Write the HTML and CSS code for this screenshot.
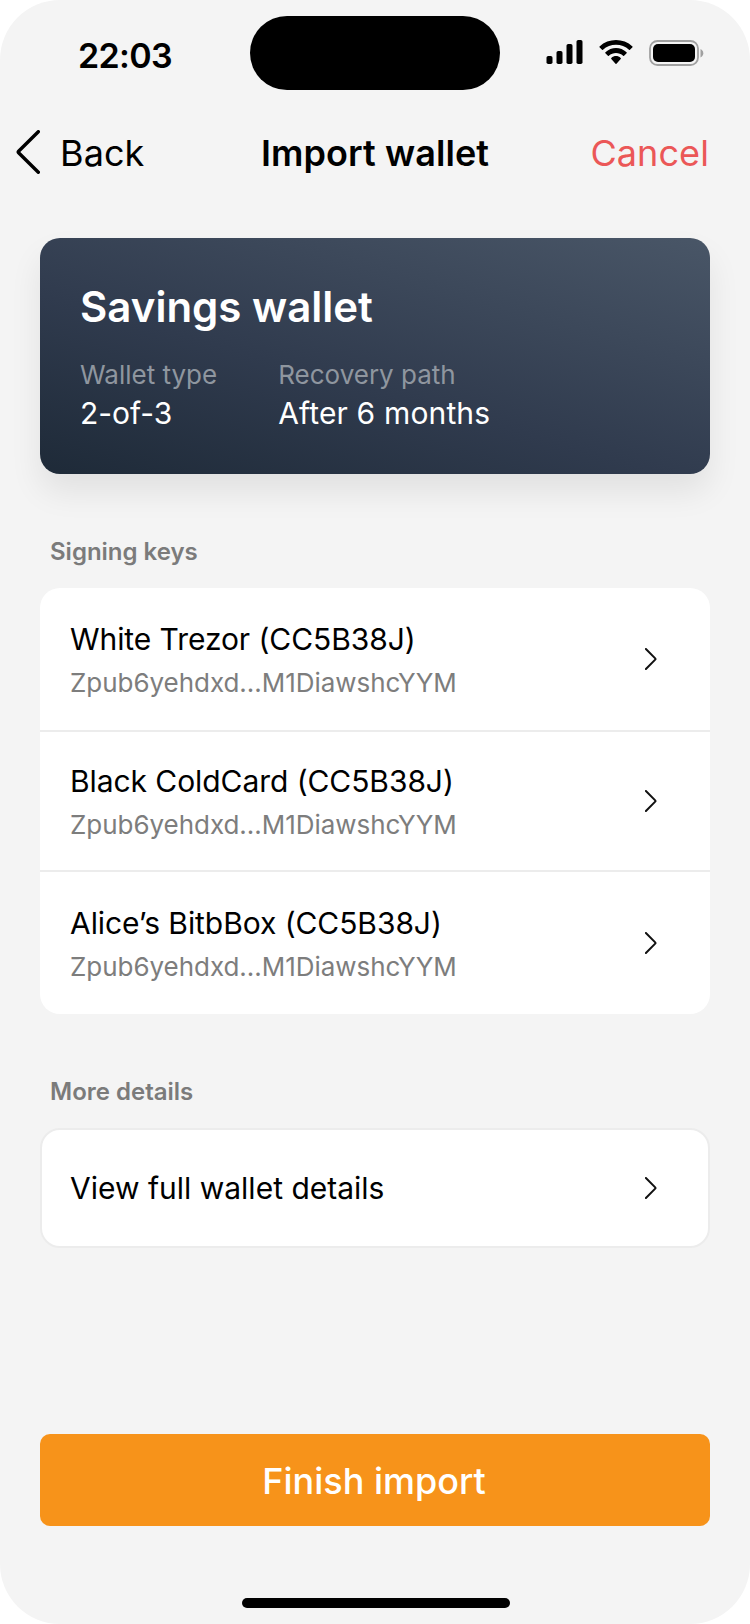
FILE: index.html
```html
<!DOCTYPE html>
<html lang="en">
<head>
<meta charset="utf-8">
<title>Import wallet</title>
<link rel="stylesheet" href="styles.css">
</head>
<body>
<div class="screen">
  <div class="status">
    <span class="time">22:03</span>
    <span class="island"></span>
    <div class="indicators">
      <svg class="signal" viewBox="-0.5 0 37 24"><rect x="0" y="16" width="6" height="8" rx="1.8"/><rect x="10" y="11" width="6" height="13" rx="1.8"/><rect x="20" y="4" width="6" height="20" rx="1.8"/><rect x="30" y="0" width="6" height="24" rx="1.8"/></svg>
      <svg class="wifi" viewBox="0 0 17.1417 12.3283"><path d="M8.5713 2.46628C11.0584 2.46639 13.4504 3.38847 15.2529 5.04195C15.3887 5.1696 15.6056 5.16799 15.7393 5.03834L17.0368 3.77487C17.1045 3.70911 17.1422 3.62004 17.1417 3.52735C17.1411 3.43467 17.1023 3.34603 17.0338 3.28104C12.3028 -1.09368 4.83907 -1.09368 0.108056 3.28104C0.039524 3.34598 0.00064 3.4346 0 3.52728C-0.00062 3.61996 0.0370483 3.70906 0.104689 3.77487L1.40255 5.03834C1.53615 5.16819 1.75327 5.1698 1.88893 5.04195C3.69167 3.38836 6.08395 2.46628 8.5713 2.46628ZM8.56795 6.68656C9.92527 6.68647 11.2341 7.19821 12.2403 8.12234C12.3763 8.25347 12.5907 8.25063 12.7234 8.11594L14.0106 6.79652C14.0784 6.72731 14.116 6.63342 14.115 6.53583C14.1141 6.43824 14.0746 6.3451 14.0054 6.27721C10.9416 3.38672 6.19688 3.38672 3.13305 6.27721C3.06384 6.3451 3.02435 6.43829 3.02345 6.53591C3.02254 6.63353 3.06028 6.7274 3.12822 6.79652L4.41513 8.11594C4.54778 8.25063 4.76215 8.25347 4.89823 8.12234C5.90368 7.19882 7.21152 6.68713 8.56795 6.68656ZM11.0924 9.48011C11.0943 9.58546 11.0572 9.68703 10.9899 9.76084L8.81327 12.2156C8.74946 12.2877 8.66247 12.3283 8.5717 12.3283C8.48093 12.3283 8.39394 12.2877 8.33013 12.2156L6.15314 9.76084C6.08585 9.68697 6.04886 9.58537 6.05091 9.48002C6.05296 9.37467 6.09386 9.27487 6.16396 9.2042C7.55377 7.8902 9.58963 7.8902 10.9794 9.2042C11.0495 9.27493 11.0903 9.37477 11.0924 9.48011Z"/></svg>
      <svg class="battery" viewBox="0 0 55 26"><rect class="shell" x="1" y="1" width="48" height="24" rx="7.6"/><path class="cap" d="M51.5 9v8.4c1.7-.7 2.8-2.3 2.8-4.2s-1.100-3.500-2.800-4.200z"/><rect x="4" y="4" width="42" height="18" rx="5"/></svg>
    </div>
  </div>

  <div class="nav">
    <div class="back">
      <svg class="back-icon" viewBox="0 0 24 44"><path d="M22.300 1.700L2.600 21.300Q1.900 22 2.600 22.700L22.300 42.300"/></svg>
      <span class="nav-text">Back</span>
    </div>
    <h1 class="nav-title nav-text">Import wallet</h1>
    <span class="cancel nav-text">Cancel</span>
  </div>

  <div class="content">
    <div class="wallet">
      <h2 class="wallet-name">Savings wallet</h2>
      <div class="facts">
        <div class="fact"><div class="fact-label">Wallet type</div><div class="fact-value">2-of-3</div></div>
        <div class="fact"><div class="fact-label">Recovery path</div><div class="fact-value path-value">After 6 months</div></div>
      </div>
    </div>

    <h3 class="section-title keys-title">Signing keys</h3>
    <div class="list">
      <div class="row">
        <div class="key-info"><div class="name">White Trezor (CC5B38J)</div><div class="key">Zpub6yehdxd...M1DiawshcYYM</div></div>
        <svg class="chevron" viewBox="0 0 12 22"><path d="M0.900 1L10.200 10.400Q10.800 11 10.200 11.600L0.900 21"/></svg>
      </div>
      <div class="row row-middle">
        <div class="key-info"><div class="name">Black ColdCard (CC5B38J)</div><div class="key">Zpub6yehdxd...M1DiawshcYYM</div></div>
        <svg class="chevron" viewBox="0 0 12 22"><path d="M0.900 1L10.200 10.400Q10.800 11 10.200 11.600L0.900 21"/></svg>
      </div>
      <div class="row">
        <div class="key-info"><div class="name">Alice’s BitbBox (CC5B38J)</div><div class="key">Zpub6yehdxd...M1DiawshcYYM</div></div>
        <svg class="chevron" viewBox="0 0 12 22"><path d="M0.900 1L10.200 10.400Q10.800 11 10.200 11.600L0.900 21"/></svg>
      </div>
    </div>

    <h3 class="section-title more-title">More details</h3>
    <div class="row details">
      <div class="name details-name">View full wallet details</div>
      <svg class="chevron" viewBox="0 0 12 22"><path d="M0.900 1L10.200 10.400Q10.800 11 10.200 11.600L0.900 21"/></svg>
    </div>

    <button class="finish">Finish import</button>
  </div>
  <div class="home-bar"></div>
</div>
</body>
</html>
```
FILE: styles.css
```css
* { box-sizing: border-box; }
body { margin: 0; background: #fff; }
h1, h2, h3 { margin: 0; font-weight: 600; }
svg { display: block; flex: none; }

.screen {
  width: 750px;
  height: 1624px;
  display: flex;
  flex-direction: column;
  background: #f4f4f4;
  border-radius: 60px;
  overflow: hidden;
  font-family: Inter, "Liberation Sans", sans-serif;
  color: #000;
}

.status {
  height: 106px;
  padding-top: 16px;
  display: grid;
  grid-template-columns: 250px 250px 250px;
  align-items: start;
}
.time { padding-top: 20px; text-align: center; font-size: 34px; font-weight: 600; line-height: 40px; letter-spacing: -0.7px; }
.island { height: 74px; border-radius: 37px; background: #000; }
.indicators { display: flex; padding: 24px 0 0 46px; }
.signal { width: 37px; height: 24px; }
.wifi { width: 34px; height: 24px; margin-left: 16px; }
.battery { width: 55px; height: 26px; margin-left: 16px; }
.shell { fill: none; stroke: #a0a0a0; stroke-width: 1.800; }
.cap { fill: #a0a0a0; }

.nav {
  height: 92px;
  padding: 0 41px 0 16px;
  display: grid;
  grid-template-columns: 246px 226px 1fr;
  align-items: center;
  font-size: 36px;
  line-height: 44px;
}
.nav-text { padding-top: 2px; letter-spacing: 0.08px; }
.back { display: flex; align-items: center; gap: 20px; }
.back-icon { width: 24px; height: 44px; fill: none; stroke: #000; stroke-width: 3.400; stroke-linecap: round; }
.nav-title { font-size: 36px; white-space: nowrap; justify-self: center; }
.cancel { text-align: right; color: #eb5757; }

.content { height: 1400px; padding: 40px 40px 0; display: flex; flex-direction: column; }

.wallet {
  height: 236px;
  padding: 43px 40px 0;
  border-radius: 20px;
  color: #fff;
  background: linear-gradient(16deg, #1e2a38, #303b4e 42%, #495667);
  box-shadow: 0 18px 32px rgba(0, 0, 0, 0.08);
}
.wallet-name { font-size: 42px; line-height: 52px; }
.facts { display: flex; gap: 61px; padding-top: 24px; }
.fact-label { font-size: 26px; line-height: 36px; color: #8f969f; }
.fact-value { font-size: 30px; line-height: 40px; }
.path-value { letter-spacing: 0.15px; }

.section-title { padding-left: 10px; font-size: 24px; line-height: 32px; color: #7b7b7b; }
.keys-title { margin: 62px 0 20px; }
.more-title { margin: 62px 0 20px; }

.list { border-radius: 20px; background: #fff; }
.row { height: 142px; padding: 0 53px 0 30px; display: flex; align-items: center; justify-content: space-between; }
.row-middle { border: solid #ececec; border-width: 2px 0; }
.key-info { padding-top: 4px; }
.name { font-size: 30px; line-height: 44px; letter-spacing: -0.07px; }
.details-name { letter-spacing: 0; }
.key { font-size: 26px; line-height: 44px; letter-spacing: -0.04px; color: #7d7d7d; }
.chevron { width: 12px; height: 22px; fill: none; stroke: #111; stroke-width: 2; stroke-linecap: round; }

.details { height: 120px; padding: 0 51px 0 28px; border: 2px solid #ececec; border-radius: 20px; background: #fff; }

.finish {
  height: 92px;
  margin-top: 186px;
  padding: 2px 2px 0 0;
  border: 0;
  border-radius: 10px;
  background: #f7931a;
  color: #fff;
  font-family: inherit;
  font-size: 36px;
  font-weight: 500;
  line-height: 44px;
}
.home-bar { width: 268px; height: 10px; margin-left: 242px; border-radius: 5px; background: #000; }
```
